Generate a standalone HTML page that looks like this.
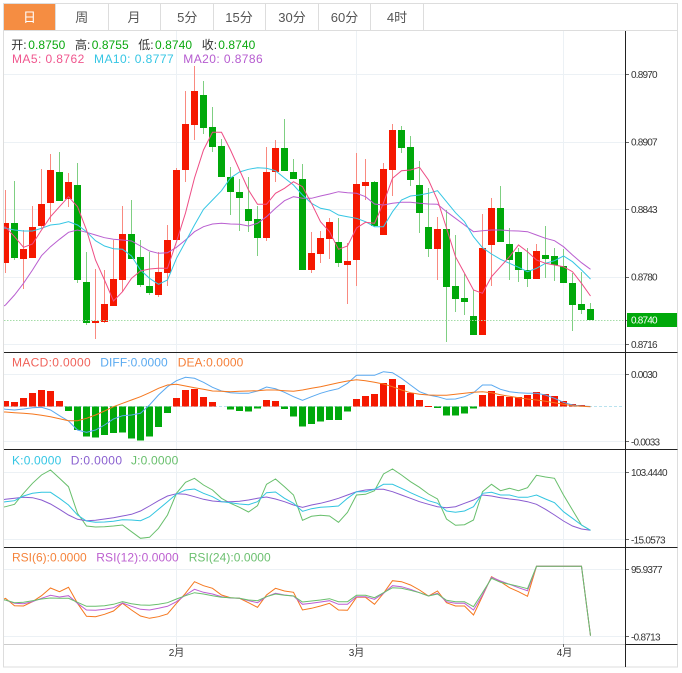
<!DOCTYPE html>
<html><head><meta charset="utf-8"><style>
html,body{margin:0;padding:0;background:#fff;width:682px;height:673px;overflow:hidden}
svg{display:block}
text{font-family:"Liberation Sans","Noto Sans CJK SC",sans-serif;font-size:12px}
.a{font-size:10px;fill:#333}
.t{font-size:13px;fill:#555;text-anchor:middle}
.b{font-size:10px;fill:#333;text-anchor:middle}
.l{fill:none;stroke-width:1}
</style></head><body>
<svg width="682" height="673" viewBox="0 0 682 673">
<defs><clipPath id="c"><rect x="4" y="31" width="621" height="613"/></clipPath></defs>
<rect x="4" y="4" width="51" height="26" fill="#f58d42"/>
<path d="M3.5 3.5H677.5V667H3.5ZM3.5 30.5H677.5M55.5 4V30M108.5 4V30M160.5 4V30M213.5 4V30M265.5 4V30M318.5 4V30M370.5 4V30M423.5 4V30" fill="none" stroke="#ddd"/>
<text class="t" x="29.5" y="22" style="fill:#fff">日</text>
<text class="t" x="81.7" y="22">周</text>
<text class="t" x="134" y="22">月</text>
<text class="t" x="187.3" y="22">5分</text>
<text class="t" x="239" y="22">15分</text>
<text class="t" x="292" y="22">30分</text>
<text class="t" x="344.5" y="22">60分</text>
<text class="t" x="397" y="22">4时</text>

<!-- grid -->
<path d="M4 74.5H625M4 142.5H625M4 209.5H625M4 277.5H625M4 344.5H625M4 374.5H625M4 441.5H625M4 472.5H625M4 539.5H625M4 569.5H625M4 636.5H625M176.5 31V644M356.5 31V644M563.5 31V644" stroke="#ecf1f5" fill="none"/>

<g clip-path="url(#c)">
<!-- wicks -->
<path d="M5.5 190V273M23.5 230V289M32.5 206V258M41.5 169V228M50.5 154V222M68.5 173V207M95.5 269V339M104.5 270V323M113.5 240V306M122.5 206V292M158.5 252V297M167.5 225V286M176.5 168V240M185.5 91V182M194.5 66V140M266.5 147V241M275.5 140V182M311.5 232V273M320.5 231V263M329.5 218V259M347.5 243V304M356.5 153V286M365.5 159V200M383.5 163V235M392.5 124V196M437.5 217V280M482.5 214V335M491.5 198V286M536.5 244V279" stroke="#f98a80" fill="none"/>
<path d="M14.5 181V260M59.5 152V201M77.5 163V283M86.5 252V325M131.5 200V259M140.5 240V287M149.5 252V295M203.5 81V134M212.5 107V152M221.5 139V177M230.5 167V215M239.5 179V231M248.5 177V232M257.5 206V256M284.5 119V171M293.5 159V179M302.5 164V270M338.5 218V267M374.5 181V227M401.5 126V153M410.5 136V186M419.5 161V233M428.5 188V257M446.5 210V342M455.5 235V312M464.5 274V315M473.5 290V335M500.5 186V242M509.5 228V280M518.5 248V282M527.5 248V287M545.5 226V278M554.5 248V281M563.5 249V283M572.5 273V331M581.5 272V314M590.5 303V320" stroke="#7fcf82" fill="none"/>
<!-- bodies -->
<path fill="#f51800" d="M2 223h7v40h-7zM20 249h7v10h-7zM29 227h7v31h-7zM38 204h7v22h-7zM47 170h7v33h-7zM65 182h7v17h-7zM92 321h7v2h-7zM101 304h7v18h-7zM110 279h7v27h-7zM119 234h7v46h-7zM155 272h7v23h-7zM164 240h7v33h-7zM173 170h7v70h-7zM182 124h7v46h-7zM191 91h7v34h-7zM263 172h7v66h-7zM272 148h7v24h-7zM308 253h7v17h-7zM317 238h7v16h-7zM326 222h7v17h-7zM344 261h7v4h-7zM353 184h7v76h-7zM362 182h7v4h-7zM380 169h7v66h-7zM389 130h7v40h-7zM434 229h7v20h-7zM479 248h7v87h-7zM488 208h7v37h-7zM533 251h7v28h-7z"/>
<path fill="#00a80a" d="M11 223h7v35h-7zM56 172h7v29h-7zM74 185h7v95h-7zM83 282h7v41h-7zM128 234h7v25h-7zM137 257h7v28h-7zM146 286h7v7h-7zM200 95h7v33h-7zM209 127h7v20h-7zM218 146h7v31h-7zM227 177h7v15h-7zM236 192h7v6h-7zM245 209h7v12h-7zM254 219h7v19h-7zM281 148h7v23h-7zM290 172h7v7h-7zM299 179h7v91h-7zM335 242h7v21h-7zM371 182h7v44h-7zM398 130h7v18h-7zM407 147h7v33h-7zM416 185h7v28h-7zM425 227h7v22h-7zM443 229h7v58h-7zM452 286h7v13h-7zM461 298h7v4h-7zM470 316h7v19h-7zM497 208h7v34h-7zM506 244h7v16h-7zM515 252h7v18h-7zM524 270h7v9h-7zM542 255h7v4h-7zM551 256h7v9h-7zM560 266h7v17h-7zM569 283h7v22h-7zM578 304h7v6h-7zM587 309h7v11h-7z"/>
<!-- MA lines -->
<path class="l" stroke="#b95fd0" d="M4 306 5.5 305 14.5 295 23.5 283.3 32.5 270 41.5 255.7 50.5 246.7 59.5 239.3 68.5 232.3 77.5 230 86.5 232.3 95.5 235 104.5 237.7 113.5 239.3 122.5 240 131.5 241 140.5 246 149.5 251 158.5 253.3 167.5 252.7 176.5 247.3 185.5 240 194.5 231.7 203.5 226.7 212.5 224 221.5 223.3 230.5 224 239.5 224.3 248.5 226 257.5 223.3 266.5 216.7 275.5 208.3 284.5 200.7 293.5 196.7 302.5 198.3 311.5 198.3 320.5 196 329.5 194 338.5 191.7 347.5 192.7 356.5 193.3 365.5 196.7 374.5 204 383.5 205 392.5 203.3 401.5 202.3 410.5 202.3 419.5 203.3 428.5 204 437.5 204.3 446.5 211.7 455.5 218.3 464.5 225 473.5 231.7 482.5 230.7 491.5 230 500.5 230 509.5 230.7 518.5 231 527.5 231.7 536.5 235 545.5 238.3 554.5 240.7 563.5 246.7 572.5 255 581.5 262.7 590.5 269.3"/>
<path class="l" stroke="#35c6e4" d="M4 228 5.5 228.3 14.5 230 23.5 231 32.5 231 41.5 228.3 50.5 225 59.5 224 68.5 221.7 77.5 225 86.5 231.7 95.5 240.7 104.5 246 113.5 248.7 122.5 249.3 131.5 256 140.5 270 149.5 278.3 158.5 284.3 167.5 280 176.5 258.3 185.5 241.7 194.5 225 203.5 209.3 212.5 200 221.5 190.7 230.5 178 239.5 172 248.5 169.3 257.5 167.7 266.5 168.3 275.5 170.7 284.5 178 293.5 185 302.5 195 311.5 203.3 320.5 208.3 329.5 210 338.5 215 347.5 216.7 356.5 218.3 365.5 221.7 374.5 226.7 383.5 226.7 392.5 211.7 401.5 200 410.5 196 419.5 195 428.5 193.3 437.5 190.7 446.5 201.7 455.5 212.7 464.5 221.7 473.5 236.7 482.5 247.7 491.5 254 500.5 259.3 509.5 263.3 518.5 267.3 527.5 271.7 536.5 268.3 545.5 263.3 554.5 260.7 563.5 256 572.5 261.7 581.5 270 590.5 279"/>
<path class="l" stroke="#ee4d85" d="M4 227 5.5 227 14.5 236.7 23.5 247.3 32.5 244 41.5 230 50.5 216.7 59.5 206.7 68.5 196.7 77.5 206.7 86.5 230 95.5 260 104.5 280 113.5 301 122.5 291.7 131.5 278.3 140.5 271 149.5 269 158.5 268.3 167.5 268.3 176.5 241.7 185.5 213 194.5 178 203.5 150 212.5 132.3 221.5 132.3 230.5 150 239.5 170 248.5 190 257.5 204.3 266.5 204.3 275.5 193.3 284.5 188.3 293.5 181.7 302.5 186.7 311.5 203.3 320.5 221.7 329.5 231.7 338.5 249.3 347.5 246 356.5 228 365.5 222.3 374.5 223.3 383.5 203 392.5 178.3 401.5 170.7 410.5 170 419.5 167.3 428.5 180 437.5 200 446.5 228 455.5 256.7 464.5 273.3 473.5 290 482.5 293.3 491.5 276.7 500.5 266.7 509.5 256.7 518.5 245 527.5 251.7 536.5 260 545.5 263.3 554.5 265 563.5 266.7 572.5 271.7 581.5 283.3 590.5 296"/>
<!-- price line -->
<path d="M4 320.5H625" stroke="#a5dca8" stroke-dasharray="1.5 1.5"/>

<!-- MACD -->
<path d="M4 406.5H624" stroke="#b9e2ee" stroke-dasharray="3 2"/>
<path fill="#f51800" d="M2 401h7v5.5h-7zM11 402h7v4.5h-7zM20 398h7v8.5h-7zM29 393h7v13.5h-7zM38 390h7v16.5h-7zM47 391h7v15.5h-7zM56 401h7v5.5h-7zM173 398h7v8.5h-7zM182 390h7v16.5h-7zM191 389h7v17.5h-7zM200 397h7v9.5h-7zM209 402h7v4.5h-7zM263 400h7v6.5h-7zM272 401h7v5.5h-7zM353 399h7v7.5h-7zM362 396h7v10.5h-7zM371 394h7v12.5h-7zM380 383h7v23.5h-7zM389 379h7v27.5h-7zM398 385h7v21.5h-7zM407 393h7v13.5h-7zM416 400h7v6.5h-7zM425 406h7v1h-7zM479 395h7v11.5h-7zM488 391h7v15.5h-7zM497 396h7v10.5h-7zM506 397h7v9.5h-7zM515 397h7v9.5h-7zM524 395h7v11.5h-7zM533 392h7v14.5h-7zM542 394h7v12.5h-7zM551 396h7v10.5h-7zM560 401h7v5.5h-7zM569 404h7v2.5h-7zM578 405h7v1.5h-7z"/>
<path fill="#00a80a" d="M65 406.5h7v4.5h-7zM74 406.5h7v23.5h-7zM83 406.5h7v30h-7zM92 406.5h7v31h-7zM101 406.5h7v28.5h-7zM110 406.5h7v26.5h-7zM119 406.5h7v26h-7zM128 406.5h7v32h-7zM137 406.5h7v34h-7zM146 406.5h7v30h-7zM155 406.5h7v20.5h-7zM164 406.5h7v6.5h-7zM227 406.5h7v3h-7zM236 406.5h7v4.5h-7zM245 406.5h7v5h-7zM254 406.5h7v2h-7zM281 406.5h7v2.5h-7zM290 406.5h7v10h-7zM299 406.5h7v20h-7zM308 406.5h7v17.5h-7zM317 406.5h7v15h-7zM326 406.5h7v13.5h-7zM335 406.5h7v13.5h-7zM344 406.5h7v5h-7zM434 406.5h7v1.5h-7zM443 406.5h7v9h-7zM452 406.5h7v9h-7zM461 406.5h7v7h-7zM470 406.5h7v2h-7z"/>
<path class="l" stroke="#5aa9f0" d="M4 409 5.5 409.3 14.5 410 23.5 409 32.5 407.7 41.5 407.3 50.5 410 59.5 415.7 68.5 421 77.5 430 86.5 432.3 95.5 430 104.5 425 113.5 419 122.5 415.7 131.5 415 140.5 413.3 149.5 405 158.5 395 167.5 386.7 176.5 380.7 185.5 377.3 194.5 378.3 203.5 382.3 212.5 387.3 221.5 391 230.5 392.7 239.5 393.3 248.5 393.3 257.5 391 266.5 387 275.5 388.7 284.5 392.3 293.5 396.7 302.5 400.3 311.5 396.7 320.5 393.3 329.5 390.7 338.5 388.7 347.5 383.3 356.5 375.3 365.5 375.3 374.5 375.3 383.5 371.7 392.5 372.7 401.5 378.3 410.5 385 419.5 391.7 428.5 395 437.5 396.7 446.5 399.3 455.5 399 464.5 396.7 473.5 392.7 482.5 385 491.5 385 500.5 389.3 509.5 391.7 518.5 392.7 527.5 393.3 536.5 393.3 545.5 395 554.5 398.3 563.5 402.3 572.5 405 581.5 406 590.5 406.5"/>
<path class="l" stroke="#f5771e" d="M4 412 5.5 412 14.5 412.7 23.5 413.3 32.5 414 41.5 415.3 50.5 416.7 59.5 418.7 68.5 420.7 77.5 420.7 86.5 418.3 95.5 415 104.5 411 113.5 406.7 122.5 403.3 131.5 400 140.5 396.7 149.5 392.7 158.5 388.3 167.5 385 176.5 384.3 185.5 386 194.5 387.7 203.5 389.3 212.5 391 221.5 391.3 230.5 391.7 239.5 391.3 248.5 391 257.5 390.7 266.5 390 275.5 390 284.5 390.7 293.5 391.3 302.5 390 311.5 388.3 320.5 386.7 329.5 384.7 338.5 382.7 347.5 381 356.5 379.7 365.5 380.7 374.5 382.3 383.5 384 392.5 386.7 401.5 390 410.5 392.7 419.5 394.3 428.5 395 437.5 395.3 446.5 395.3 455.5 394.3 464.5 393.3 473.5 392.3 482.5 391.7 491.5 392.7 500.5 394.7 509.5 396.3 518.5 397.7 527.5 399 536.5 400 545.5 401.3 554.5 402.7 563.5 404.3 572.5 405.7 581.5 406.3 590.5 406.7"/>

<!-- KDJ -->
<path class="l" stroke="#68bf6c" d="M4 507 5.5 506.7 14.5 504.3 23.5 493.3 32.5 483.3 41.5 475 50.5 470 59.5 478.3 68.5 486.7 77.5 513.3 86.5 526 95.5 527 104.5 526.7 113.5 526 122.5 525 131.5 531.7 140.5 538.3 149.5 537.3 158.5 528.3 167.5 515 176.5 493.3 185.5 482.3 194.5 478.3 203.5 485 212.5 490 221.5 498.3 230.5 503.3 239.5 507.3 248.5 512 257.5 505.7 266.5 484.3 275.5 479 284.5 486.7 293.5 495 302.5 520.3 311.5 516.3 320.5 515.3 329.5 516 338.5 522.3 347.5 512.3 356.5 495 365.5 494.3 374.5 490.7 383.5 474 392.5 469 401.5 475 410.5 481.7 419.5 487.3 428.5 494 437.5 499 446.5 519 455.5 525.3 464.5 524.7 473.5 520 482.5 491.7 491.5 484.3 500.5 490.7 509.5 488.3 518.5 490.7 527.5 487.7 536.5 475.3 545.5 477 554.5 478.3 563.5 495 572.5 510 581.5 525 590.5 530.3"/>
<path class="l" stroke="#8a5cd0" d="M4 499.5 5.5 499.3 14.5 498.3 23.5 497.3 32.5 497.7 41.5 500 50.5 504 59.5 509.3 68.5 515 77.5 519.3 86.5 520.7 95.5 520.3 104.5 519 113.5 517.7 122.5 516 131.5 514.3 140.5 511 149.5 506 158.5 500.7 167.5 496 176.5 493.7 185.5 494.3 194.5 496.7 203.5 499.3 212.5 501 221.5 501.7 230.5 501.7 239.5 501.3 248.5 500 257.5 498.3 266.5 497 275.5 499 284.5 501.7 293.5 505 302.5 507.3 311.5 505 320.5 503.3 329.5 501 338.5 498.3 347.5 495 356.5 491.7 365.5 490 374.5 489.3 383.5 489.3 392.5 491.7 401.5 495 410.5 498.3 419.5 501.7 428.5 504.3 437.5 506.7 446.5 507.7 455.5 506.7 464.5 503.3 473.5 500 482.5 495 491.5 496 500.5 497.7 509.5 499 518.5 500 527.5 501.7 536.5 504.3 545.5 509.3 554.5 515 563.5 521 572.5 526 581.5 529 590.5 530.3"/>
<path class="l" stroke="#32c5e0" d="M4 502 5.5 501.7 14.5 500.7 23.5 496 32.5 493.3 41.5 492.3 50.5 492.3 59.5 498.3 68.5 505 77.5 515 86.5 521 95.5 522.3 104.5 522 113.5 521.3 122.5 519.7 131.5 520 140.5 520.7 149.5 516.7 158.5 509.3 167.5 501.7 176.5 494 185.5 490 194.5 489 203.5 493.3 212.5 496.7 221.5 501.7 230.5 502.7 239.5 504 248.5 504.7 257.5 501.7 266.5 492.7 275.5 492 284.5 498.3 293.5 503.3 302.5 511.3 311.5 508.7 320.5 507.3 329.5 506.7 338.5 506 347.5 498.3 356.5 491.7 365.5 491.7 374.5 489.3 383.5 484.3 392.5 484.3 401.5 488.3 410.5 492.7 419.5 496.7 428.5 500.7 437.5 503.3 446.5 511 455.5 512.3 464.5 511 473.5 506.7 482.5 493.3 491.5 492.3 500.5 495 509.5 495 518.5 497.3 527.5 497.3 536.5 495 545.5 499 554.5 502.7 563.5 511.7 572.5 518.3 581.5 525 590.5 530.3"/>

<!-- RSI -->
<path class="l" stroke="#f5771e" d="M4 599 5.5 598.3 14.5 605.7 23.5 606 32.5 601.7 41.5 595.7 50.5 588 59.5 591.7 68.5 587.3 77.5 603.3 86.5 616.3 95.5 616.7 104.5 614.3 113.5 611 122.5 603.3 131.5 610 140.5 616 149.5 618.3 158.5 616.7 167.5 614 176.5 603.3 185.5 593.3 194.5 581.7 203.5 585.7 212.5 588.3 221.5 595 230.5 597.7 239.5 598.3 248.5 602.7 257.5 607.3 266.5 595 275.5 588.3 284.5 591 293.5 592.3 302.5 610 311.5 608.3 320.5 606 329.5 603.3 338.5 610 347.5 610.3 356.5 597.3 365.5 597.3 374.5 604.3 383.5 593.3 392.5 580.7 401.5 581.7 410.5 585 419.5 590 428.5 596 437.5 591 446.5 602.7 455.5 606 464.5 606 473.5 615 482.5 596 491.5 576.7 500.5 581.7 509.5 587.7 518.5 591.7 527.5 596.3 536.5 566.3 545.5 566.3 554.5 566.3 563.5 566.3 572.5 566.3 581.5 566.3 590.5 635.7"/>
<path class="l" stroke="#bd5fd2" d="M4 600 5.5 600 14.5 603.3 23.5 603.7 32.5 601.7 41.5 598.3 50.5 595.3 59.5 597 68.5 595.7 77.5 603.3 86.5 610 95.5 610.3 104.5 609.3 113.5 607.7 122.5 603 131.5 606.3 140.5 609.3 149.5 610 158.5 608.3 167.5 606.3 176.5 601.7 185.5 595 194.5 589.3 203.5 592.3 212.5 594 221.5 596.7 230.5 598 239.5 598.3 248.5 600.7 257.5 602.7 266.5 596.7 275.5 593.3 284.5 595 293.5 596 302.5 604.3 311.5 603.3 320.5 602 329.5 600.7 338.5 604.3 347.5 604.3 356.5 596.7 365.5 596.7 374.5 599.3 383.5 593.3 392.5 585.7 401.5 586.7 410.5 589.3 419.5 592.7 428.5 596 437.5 593.3 446.5 601.7 455.5 603.3 464.5 603.3 473.5 610 482.5 595 491.5 577.3 500.5 581 509.5 584.3 518.5 587.7 527.5 590.7 536.5 566.3 545.5 566.3 554.5 566.3 563.5 566.3 572.5 566.3 581.5 566.3 590.5 635.7"/>
<path class="l" stroke="#68bf6c" d="M4 600 5.5 600 14.5 602.7 23.5 602.3 32.5 600.7 41.5 599 50.5 598 59.5 598.3 68.5 598.3 77.5 602.3 86.5 606.3 95.5 606.3 104.5 605.7 113.5 604.3 122.5 601.7 131.5 603.7 140.5 605 149.5 605.3 158.5 604.3 167.5 602.7 176.5 599 185.5 595.7 194.5 592.7 203.5 594 212.5 595.7 221.5 597.3 230.5 597.7 239.5 598.3 248.5 600 257.5 600.7 266.5 596.7 275.5 594 284.5 595.3 293.5 596 302.5 602 311.5 601 320.5 600 329.5 598.7 338.5 601.7 347.5 601.7 356.5 595.3 365.5 595.3 374.5 597.7 383.5 592.7 392.5 587.7 401.5 588.3 410.5 590.3 419.5 592.7 428.5 596 437.5 594 446.5 600.3 455.5 601.7 464.5 601.7 473.5 606.7 482.5 592.7 491.5 578.3 500.5 582.3 509.5 584.3 518.5 586.3 527.5 588.7 536.5 566.3 545.5 566.3 554.5 566.3 563.5 566.3 572.5 566.3 581.5 566.3 590.5 635.7"/>
</g>

<!-- frame lines -->
<path d="M4 352.5H677.5M4 449.5H677.5M4 547.5H677.5M625.5 644.5H677.5M625.5 31V667" stroke="#222" fill="none"/>
<path d="M4 644.5H625" stroke="#ccc"/>
<path d="M626 74.5H629M626 142.5H629M626 209.5H629M626 277.5H629M626 320.5H629M626 344.5H629M626 374.5H629M626 441.5H629M626 472.5H629M626 539.5H629M626 569.5H629M626 636.5H629M176.5 644V647M356.5 644V647M563.5 644V647" stroke="#666"/>

<!-- price tag -->
<rect x="627" y="313" width="50" height="14" fill="#00a80a"/>
<text class="a" x="631" y="323.5" textLength="26.5" style="fill:#fff">0.8740</text>
<text class="a" x="631" y="78" textLength="26.5">0.8970</text>
<text class="a" x="631" y="145.5" textLength="26.5">0.8907</text>
<text class="a" x="631" y="213" textLength="26.5">0.8843</text>
<text class="a" x="631" y="280.5" textLength="26.5">0.8780</text>
<text class="a" x="631" y="348" textLength="26.5">0.8716</text>
<text class="a" x="631" y="378" textLength="26.5">0.0030</text>
<text class="a" x="631" y="445.5" textLength="29">-0.0033</text>
<text class="a" x="631" y="476" textLength="36.5">103.4440</text>
<text class="a" x="631" y="543.5" textLength="34.5">-15.0573</text>
<text class="a" x="631" y="573" textLength="31.5">95.9377</text>
<text class="a" x="631" y="640.5" textLength="29.5">-0.8713</text>
<text class="b" x="176.5" y="656">2月</text>
<text class="b" x="356.5" y="656">3月</text>
<text class="b" x="564.5" y="656">4月</text>

<!-- legends -->
<text x="11.3" y="49" fill="#333">开:</text><text x="28.3" y="49" fill="#0aa80f" textLength="37">0.8750</text>
<text x="75" y="49" fill="#333">高:</text><text x="91.7" y="49" fill="#0aa80f" textLength="37">0.8755</text>
<text x="138.3" y="49" fill="#333">低:</text><text x="155" y="49" fill="#0aa80f" textLength="37">0.8740</text>
<text x="201.7" y="49" fill="#333">收:</text><text x="218.3" y="49" fill="#0aa80f" textLength="37">0.8740</text>
<text x="12" y="63" fill="#f0568e" textLength="72.3">MA5: 0.8762</text>
<text x="94" y="63" fill="#35c6e4" textLength="79.7">MA10: 0.8777</text>
<text x="183.3" y="63" fill="#b65cd0" textLength="79.4">MA20: 0.8786</text>
<text x="12" y="366.5" fill="#f0625a" textLength="78.7">MACD:0.0000</text>
<text x="100.3" y="366.5" fill="#5aaaf0" textLength="67.4">DIFF:0.0000</text>
<text x="177.7" y="366.5" fill="#f5803a" textLength="65.6">DEA:0.0000</text>
<text x="12" y="464.5" fill="#35c6e4" textLength="49.3">K:0.0000</text>
<text x="70.7" y="464.5" fill="#8a60d0" textLength="51.3">D:0.0000</text>
<text x="131" y="464.5" fill="#68bf6c" textLength="47.3">J:0.0000</text>
<text x="12" y="561.5" fill="#f5843c" textLength="74.7">RSI(6):0.0000</text>
<text x="96.3" y="561.5" fill="#bd60d0" textLength="82.4">RSI(12):0.0000</text>
<text x="188.7" y="561.5" fill="#6cc070" textLength="82">RSI(24):0.0000</text>
</svg>
</body></html>
